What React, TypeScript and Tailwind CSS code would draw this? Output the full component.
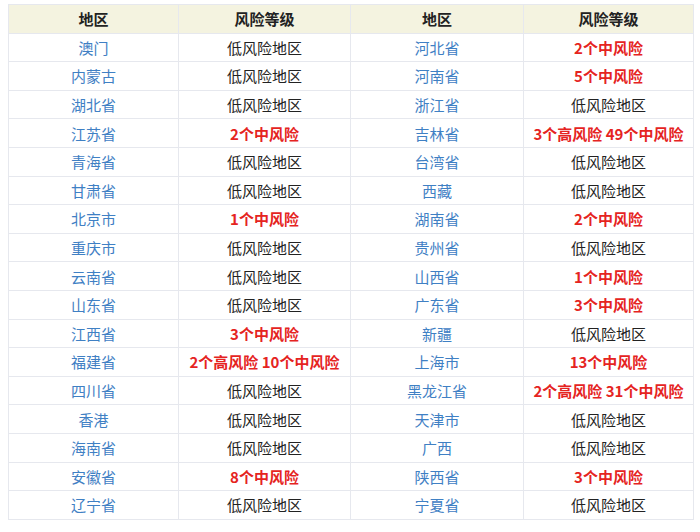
import React from "react";

type Row = [string, string, string, string];

const ROWS: Row[] = [
  ["澳门", "低风险地区", "河北省", "2个中风险"],
  ["内蒙古", "低风险地区", "河南省", "5个中风险"],
  ["湖北省", "低风险地区", "浙江省", "低风险地区"],
  ["江苏省", "2个中风险", "吉林省", "3个高风险 49个中风险"],
  ["青海省", "低风险地区", "台湾省", "低风险地区"],
  ["甘肃省", "低风险地区", "西藏", "低风险地区"],
  ["北京市", "1个中风险", "湖南省", "2个中风险"],
  ["重庆市", "低风险地区", "贵州省", "低风险地区"],
  ["云南省", "低风险地区", "山西省", "1个中风险"],
  ["山东省", "低风险地区", "广东省", "3个中风险"],
  ["江西省", "3个中风险", "新疆", "低风险地区"],
  ["福建省", "2个高风险 10个中风险", "上海市", "13个中风险"],
  ["四川省", "低风险地区", "黑龙江省", "2个高风险 31个中风险"],
  ["香港", "低风险地区", "天津市", "低风险地区"],
  ["海南省", "低风险地区", "广西", "低风险地区"],
  ["安徽省", "8个中风险", "陕西省", "3个中风险"],
  ["辽宁省", "低风险地区", "宁夏省", "低风险地区"],
];

const Region = ({ name }: { name: string }) => (
  <td className="h-[28.6px] border border-[#e6e8ee] p-0 text-center text-[#3f80c4]">
    {name}
  </td>
);

const Level = ({ text }: { text: string }) => {
  const low = text === "低风险地区";
  return (
    <td
      className={`h-[28.6px] border border-[#e6e8ee] p-0 text-center ${
        low ? "text-[#222]" : "font-bold text-[#e5241f]"
      }`}
    >
      {text}
    </td>
  );
};

export default function App() {
  return (
    <div className="h-[532px] w-[700px] bg-white pl-[8px] pt-[4px] font-['Noto_Sans_CJK_SC','Noto_Sans',sans-serif] text-[15px] leading-none">
      <table className="w-[685px] table-fixed border-collapse">
        <thead>
          <tr className="bg-[#f4f3e0]">
            <th className="h-[28.6px] w-[170px] border border-[#e6e8ee] p-0 font-bold text-[#222]">地区</th>
            <th className="h-[28.6px] w-[172px] border border-[#e6e8ee] p-0 font-bold text-[#222]">风险等级</th>
            <th className="h-[28.6px] w-[173px] border border-[#e6e8ee] p-0 font-bold text-[#222]">地区</th>
            <th className="h-[28.6px] w-[170px] border border-[#e6e8ee] p-0 font-bold text-[#222]">风险等级</th>
          </tr>
        </thead>
        <tbody>
          {ROWS.map((row) => (
            <tr key={row[0]}>
              <Region name={row[0]} />
              <Level text={row[1]} />
              <Region name={row[2]} />
              <Level text={row[3]} />
            </tr>
          ))}
        </tbody>
      </table>
    </div>
  );
}
